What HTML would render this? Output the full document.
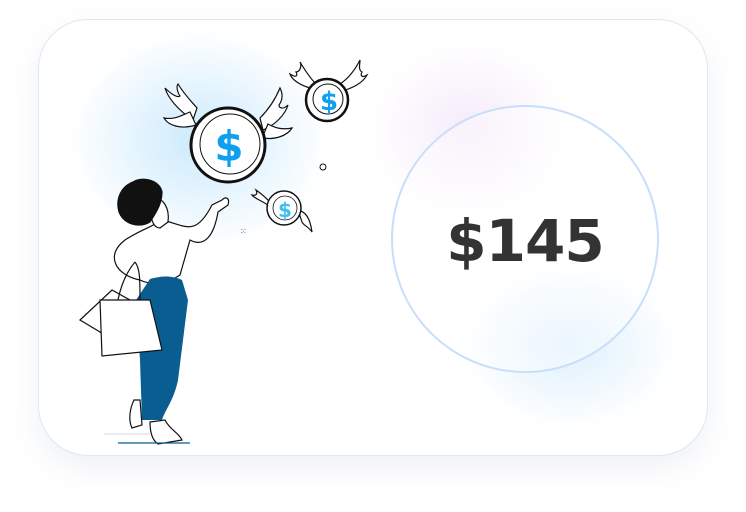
<!DOCTYPE html>
<html><head><style>
html,body{margin:0;padding:0;background:#fff;width:746px;height:512px;overflow:hidden}
.card{position:absolute;left:38px;top:19px;width:668px;height:435px;border:1.5px solid #dbe8f5;border-radius:50px;background:#fff;box-shadow:0 12px 30px rgba(120,140,170,0.12);overflow:hidden}
.g1{position:absolute;left:30px;top:10px;width:260px;height:220px;border-radius:50%;background:radial-gradient(closest-side,rgba(170,220,250,0.6),rgba(170,220,250,0));}
.g2{position:absolute;left:330px;top:20px;width:200px;height:180px;border-radius:50%;background:radial-gradient(closest-side,rgba(235,215,245,0.5),rgba(235,215,245,0));}
.g3{position:absolute;left:420px;top:240px;width:220px;height:170px;border-radius:50%;background:radial-gradient(closest-side,rgba(195,228,252,0.55),rgba(195,228,252,0));}
.circ{position:absolute;left:352px;top:85px;width:264px;height:264px;border-radius:50%;border:2px solid #c9defa;background:rgba(255,255,255,0.4)}
.price{position:absolute;left:352px;top:85px;width:268px;height:264px;text-align:center;font:bold 58px "DejaVu Sans","Liberation Sans",sans-serif;line-height:272px;color:#333;letter-spacing:-1px}
svg{position:absolute;left:0;top:0}
</style></head><body>
<div class="card"><div class="g1"></div><div class="g2"></div><div class="g3"></div><div class="circ"></div><div class="price">$145</div></div>
<svg width="746" height="512" viewBox="0 0 746 512" fill="none" stroke="#111" stroke-width="1.2">
<path d="M193 120 C178 110 168 98 165 88 C172 95 178 98 180 96 C176 90 177 85 178 84 C184 94 190 100 197 108 Z" fill="#fff"/>
<path d="M196 125 C180 130 168 125 164 118 C175 120 182 115 190 112 Z" fill="#fff"/>
<path d="M263 130 C275 125 285 115 288 105 C283 110 279 108 279 105 C284 98 282 92 280 88 C275 100 268 110 260 118 Z" fill="#fff"/>
<path d="M262 138 C275 140 287 136 292 128 C282 130 275 128 268 124 Z" fill="#fff"/>
<circle cx="228" cy="145" r="37" fill="#fff" stroke-width="3"/>
<circle cx="230" cy="144" r="30" stroke-width="1"/>
<text x="229" y="161" font-family="DejaVu Sans,Liberation Sans,sans-serif" font-weight="bold" font-size="42" fill="#0ea0ee" stroke="none" text-anchor="middle">$</text>
<path d="M310 88 C300 85 292 80 290 74 C296 78 298 76 296 72 C300 72 302 66 300 62 C306 72 312 80 316 84 Z" fill="#fff"/>
<path d="M340 92 C352 88 362 84 367 75 C362 78 360 76 362 72 C358 70 360 64 360 60 C354 72 346 80 340 84 Z" fill="#fff"/>
<circle cx="327" cy="100" r="21" fill="#fff" stroke-width="2.5"/>
<circle cx="328" cy="99" r="15" stroke-width="1"/>
<text x="329" y="110" font-family="DejaVu Sans,Liberation Sans,sans-serif" font-weight="bold" font-size="26" fill="#0ea0ee" stroke="none" text-anchor="middle">$</text>
<path d="M268 205 C260 200 254 198 252 195 C256 196 258 194 256 190 C262 194 266 198 270 202 Z" fill="#fff"/>
<path d="M298 210 C306 212 310 218 312 232 C308 226 304 226 302 222 Z" fill="#fff"/>
<circle cx="284" cy="208" r="17" fill="#fff" stroke-width="1.5"/>
<circle cx="285" cy="208" r="12" stroke-width="0.8"/>
<text x="285" y="217" font-family="DejaVu Sans,Liberation Sans,sans-serif" font-weight="bold" font-size="20" fill="#3cc0f0" stroke="none" text-anchor="middle">$</text>
<circle cx="323" cy="167" r="3" stroke-width="1"/>
<text x="240" y="234" font-size="8" fill="#333" stroke="none">⁙</text>
<path d="M162 220 C185 225 195 238 212 205 L222 200 C226 196 230 198 228 205 L218 212 C214 235 205 248 190 240 L180 275 C165 285 150 285 140 280 C115 275 105 255 125 240 C140 230 150 228 162 220 Z" fill="#fff"/>
<path d="M155 200 C162 196 170 208 168 222 L160 228 C154 228 150 220 152 210 Z" fill="#fff"/>
<path d="M133 182 C142 176 160 180 162 192 C162 202 158 210 150 222 C140 228 124 225 119 212 C115 198 122 186 133 182 Z" fill="#111"/>
<path d="M150 279 C160 276 172 275 182 280 L188 300 L178 380 C174 400 165 410 162 420 L142 420 L140 360 L136 300 Z" fill="#0a5d91" stroke="none"/>
<path d="M134 400 L140 400 L142 425 L132 428 C128 420 130 408 134 400 Z" fill="#fff"/>
<path d="M150 422 L165 420 C170 430 178 432 182 440 L158 444 C152 440 150 432 150 422 Z" fill="#fff"/>
<path d="M80 320 L112 290 L130 300 L110 340 L100 332 Z" fill="#fff"/>
<path d="M100 300 L150 300 L162 350 L102 356 Z" fill="#fff"/>
<path d="M118 300 C122 280 130 268 135 262 M140 300 C140 280 140 268 135 262" />
<line x1="118" y1="443" x2="190" y2="443" stroke="#0a5d91" stroke-width="1.2"/>
<line x1="104" y1="434" x2="150" y2="434" stroke="#aac" stroke-width="0.6"/>
</svg>
</body></html>
